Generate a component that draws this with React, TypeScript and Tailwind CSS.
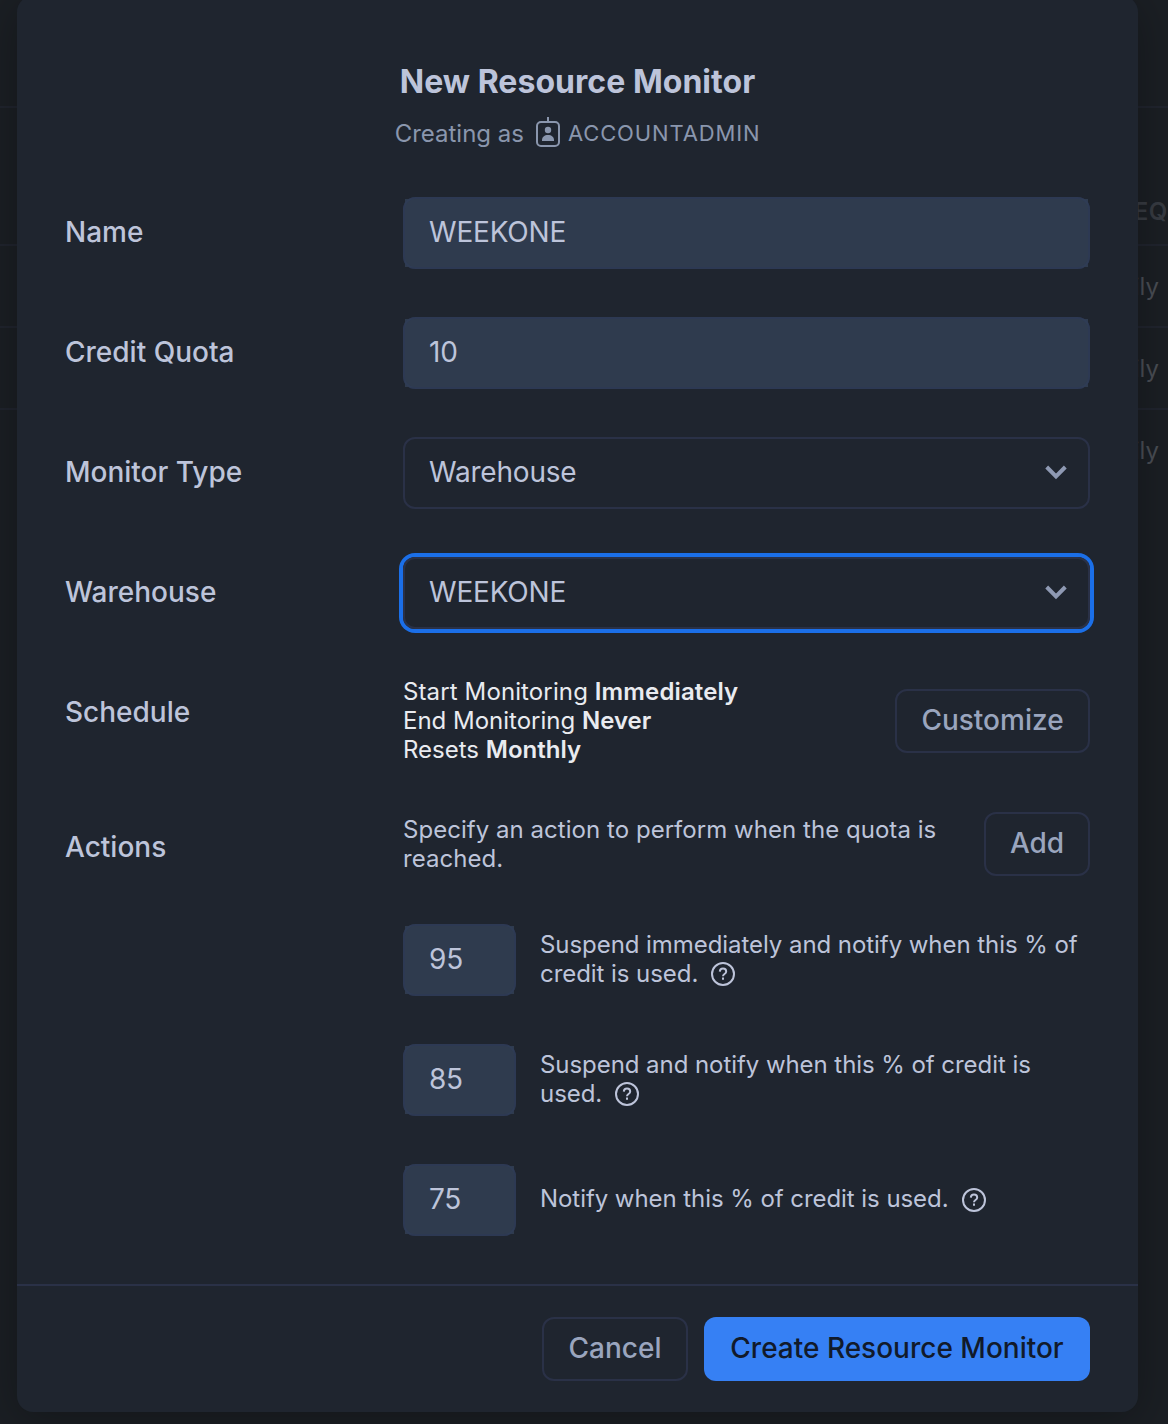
import type { ReactNode } from "react";

function RoleIcon() {
  return (
    <svg className="h-8 w-8 shrink-0" viewBox="0 0 32 32" fill="none" stroke="#8a96ad" strokeWidth="2">
      <rect x="5" y="7" width="22" height="24" rx="4" />
      <path d="M16 2v5" />
      <circle cx="16" cy="15" r="3.2" fill="#8a96ad" stroke="none" />
      <path d="M10 26v-1c0-3 2.500-5 6-5s6 2 6 5v1z" fill="#8a96ad" stroke="none" />
    </svg>
  );
}

function Chevron() {
  return (
    <svg className="h-6 w-6" viewBox="0 0 24 24" fill="none" stroke="#8e99b3" strokeWidth="4">
      <path d="M2.700 7L12 16.300L21.300 7" />
    </svg>
  );
}

function HelpIcon() {
  return (
    <svg className="ml-3 inline-block h-[26px] w-[26px] -mt-1 -mb-[3px] align-middle" viewBox="0 0 26 26" fill="none" stroke="#bdc4da" strokeWidth="2">
      <circle cx="13" cy="13" r="11" />
      <path d="M9.800 10.600c.1-1.900 1.400-3 3.200-3s3.200 1.100 3.200 2.800c0 1.300-.7 1.900-1.700 2.600-1 .7-1.500 1.100-1.500 2.200" />
      <path d="M13 16.600v2.200" />
    </svg>
  );
}

function Row({ label, children }: { label: string; children: ReactNode }) {
  return (
    <div className="mb-12 flex h-[72px] items-center">
      <div className="w-[338px] shrink-0 pb-0.5 font-medium">{label}</div>
      {children}
    </div>
  );
}

function Field({ value, size }: { value: string; size: string }) {
  return (
    <div className={`relative flex h-[72px] shrink-0 rounded-xl border-2 border-[#2b354b] ${size}`}>
      <div className="flex grow items-center bg-[#2f3b4e] px-6 pb-0.5 tracking-[-0.2px]">{value}</div>
      <div className="pointer-events-none absolute -inset-0.5 rounded-xl border-2 border-[#303d5c]/50" />
    </div>
  );
}

function Select({ value, focused }: { value: string; focused?: boolean }) {
  return (
    <div
      className={`flex h-[72px] grow items-center justify-between rounded-xl border-2 border-[#2a3147] pr-5 pb-0.5 pl-6 tracking-[-0.2px] ${
        focused ? "ring-4 ring-[#1b6fe8]" : ""
      }`}
    >
      {value}
      <Chevron />
    </div>
  );
}

function Button({ children, size }: { children: ReactNode; size: string }) {
  return (
    <button className={`flex h-16 shrink-0 items-center justify-center rounded-xl border-2 border-[#2a3147] pb-0.5 font-medium text-[#9aa5be] ${size}`}>
      {children}
    </button>
  );
}

function Action({ value, children }: { value: string; children: ReactNode }) {
  return (
    <div className="mb-12 ml-[338px] flex h-[72px] items-center">
      <Field value={value} size="w-[113px]" />
      <p className="ml-6 pb-[3px] text-[24px] leading-[29px] tracking-[-0.06px] whitespace-nowrap">{children}</p>
    </div>
  );
}

const backdropRows = [
  { text: "EQ", style: "h-[138px] items-end pb-[15px] text-[24px] font-semibold tracking-wide text-[#373b42]" },
  { text: "Daily", style: "h-[82px] items-center pt-0.5 pr-[9px] text-[24px] text-[#4a4e55]" },
  { text: "Daily", style: "h-[82px] items-center pt-0.5 pr-[9px] text-[24px] text-[#4a4e55]" },
  { text: "Daily", style: "h-[82px] items-center pt-0.5 pr-[9px] text-[24px] text-[#4a4e55]" },
];

export default function App() {
  return (
    <div className="relative h-[1424px] w-[1168px] overflow-hidden bg-[#1b1f24] font-['Inter',sans-serif] text-[28px] leading-[34px] text-[#bdc4da]">
      <div className="pt-[106px]">
        {backdropRows.map((row, i) => (
          <div key={i} className={`flex justify-end border-t-2 border-[#20242e] ${row.style}`}>
            {row.text}
          </div>
        ))}
      </div>

      <main className="absolute -top-1 left-[17px] h-[1416px] w-[1121px] rounded-2xl bg-[#1f252f] shadow-[0_8px_48px_rgba(0,0,0,0.3)]">
        <header className="flex h-[201px] flex-col items-center pt-[66px]">
          <h1 className="text-[32px] leading-[40px] font-bold tracking-[0.04px]">New Resource Monitor</h1>
          <div className="mt-[13px] flex items-center text-[24px] text-[#8a96ad]">
            <span className="pt-0.5">Creating as</span>
            <span className="ml-2 -mt-1">
              <RoleIcon />
            </span>
            <span className="ml-1 text-[22px] tracking-[0.86px]">ACCOUNTADMIN</span>
          </div>
        </header>

        <section className="h-[1087px] px-12">
          <Row label="Name">
            <Field value="WEEKONE" size="grow" />
          </Row>
          <Row label="Credit Quota">
            <Field value="10" size="grow" />
          </Row>
          <Row label="Monitor Type">
            <Select value="Warehouse" />
          </Row>
          <Row label="Warehouse">
            <Select value="WEEKONE" focused />
          </Row>

          <div className="flex h-[135px]">
            <div className="w-[338px] shrink-0 pt-[18px] font-medium">Schedule</div>
            <div className="grow text-[24px] leading-[29px] text-[#e9ebf0]">
              <p className="tracking-[0.12px]">Start Monitoring <b className="font-semibold">Immediately</b></p>
              <p>End Monitoring <b className="font-semibold">Never</b></p>
              <p>Resets <b className="font-semibold">Monthly</b></p>
            </div>
            <div className="pt-3">
              <Button size="w-[195px]">Customize</Button>
            </div>
          </div>

          <div className="flex h-[112px]">
            <div className="w-[338px] shrink-0 pt-[18px] font-medium">Actions</div>
            <p className="grow pt-[3px] text-[24px] leading-[29px] tracking-[0.04px] whitespace-nowrap">
              Specify an action to perform when the quota is
              <br />
              reached.
            </p>
            <Button size="w-[106px]">Add</Button>
          </div>

          <Action value="95">
            Suspend immediately and notify when this % of
            <br />
            credit is used.
            <HelpIcon />
          </Action>
          <Action value="85">
            Suspend and notify when this % of credit is
            <br />
            used.
            <HelpIcon />
          </Action>
          <Action value="75">
            Notify when this % of credit is used.
            <HelpIcon />
          </Action>
        </section>

        <footer className="flex h-[128px] justify-end gap-4 border-t-2 border-[#2a3147] px-12 pt-[31px]">
          <Button size="w-[146px]">Cancel</Button>
          <button className="flex h-16 w-[386px] items-center justify-center rounded-xl bg-[#3680f4] pb-0.5 font-medium text-[#111a2b]">
            Create Resource Monitor
          </button>
        </footer>
      </main>
    </div>
  );
}
